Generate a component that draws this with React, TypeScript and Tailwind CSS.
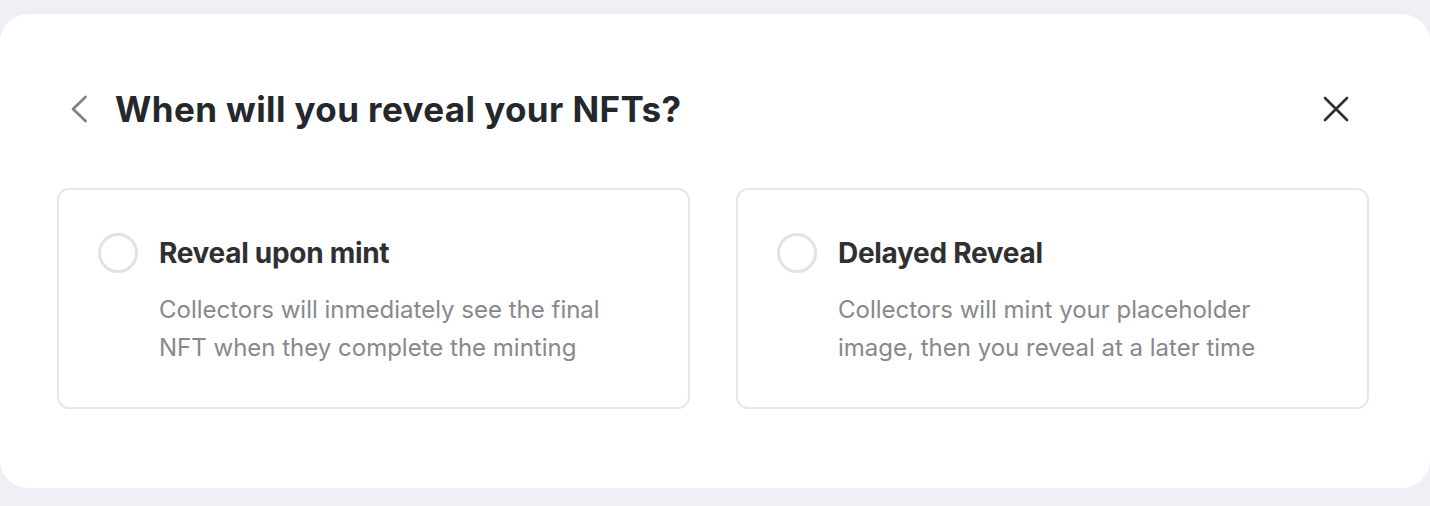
import { type ReactNode } from "react";

// Paso del asistente: elegir cuándo se revelan los NFTs.

const opciones = [
  {
    id: "mint",
    titulo: "Reveal upon mint",
    texto: ["Collectors will inmediately see the final", "NFT when they complete the minting"],
  },
  {
    id: "delayed",
    titulo: "Delayed Reveal",
    texto: ["Collectors will mint your placeholder", "image, then you reveal at a later time"],
  },
];

function Opcion({ titulo, children }: { titulo: string; children: ReactNode }) {
  return (
    <button
      type="button"
      className="flex h-[221px] flex-1 items-start gap-[21px] rounded-[12px] border-2 border-[#e6e6eb] bg-white pl-[39px] pt-[43px] text-left"
    >
      <span className="h-10 w-10 flex-shrink-0 rounded-full border-[3px] border-[#e2e1e8]" />
      <div className="flex flex-col">
        <p className="text-[28px] font-bold leading-[40px] tracking-[-0.3px] text-[#303033]">{titulo}</p>
        <p className="mt-[18px] text-[24px] leading-[38px] text-[#88888d]">{children}</p>
      </div>
    </button>
  );
}

export default function App() {
  return (
    <div
      className="min-h-[506px] bg-[#f0eff5] pb-[19px] pt-[14px]"
      style={{ fontFamily: "Inter, 'Liberation Sans', sans-serif" }}
    >
      <div className="rounded-[28px] bg-white pb-[79px] pl-[57px] pr-[61px] pt-[67px]">
        <div className="flex h-[56px] items-center">
          <button type="button" aria-label="Volver" className="ml-[13px] text-[#828287]">
            <svg width="18" height="28" viewBox="0 0 18 28" fill="none">
              <path d="M15.5 2 L3 14 L15.5 26" stroke="currentColor" strokeWidth="2.8" strokeLinecap="round" strokeLinejoin="round" />
            </svg>
          </button>
          <h1 className="ml-[27px] text-[35px] font-bold tracking-[0.4px] text-[#24272b]">
            When will you reveal your NFTs?
          </h1>
          <button type="button" aria-label="Cerrar" className="ml-auto mr-[20px] text-[#2f2f33]">
            <svg width="26" height="26" viewBox="0 0 26 26" fill="none">
              <path d="M2 2 L24 24 M24 2 L2 24" stroke="currentColor" strokeWidth="2.6" strokeLinecap="round" />
            </svg>
          </button>
        </div>

        <div className="mt-[51px] flex gap-[46px]">
          {opciones.map((o) => (
            <Opcion key={o.id} titulo={o.titulo}>
              {o.texto[0]}
              <br />
              {o.texto[1]}
            </Opcion>
          ))}
        </div>
      </div>
    </div>
  );
}
